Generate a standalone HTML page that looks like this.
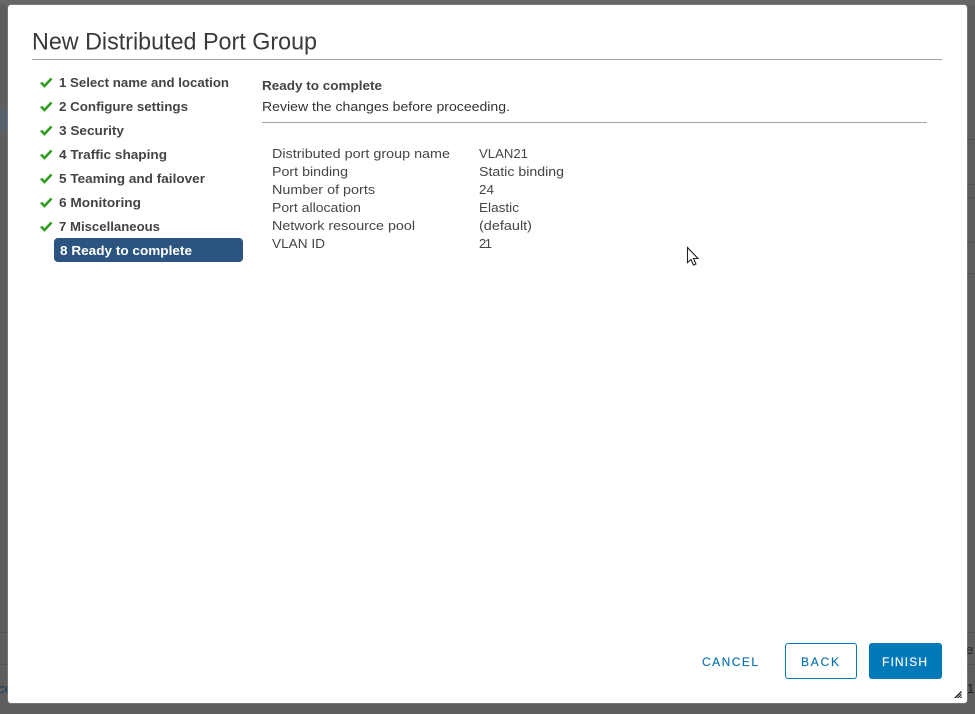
<!DOCTYPE html>
<html lang="en">
<head>
<meta charset="utf-8">
<title>New Distributed Port Group</title>
<style>
html,body{margin:0;padding:0;width:975px;height:714px;overflow:hidden;background:#5e5e5e}
svg{display:block;position:absolute;left:0;top:0}
text{font-family:"Liberation Sans",sans-serif}
.m{font-size:13px;font-weight:700;fill:#444}
.t{font-size:13px;fill:#454545}
.b{font-size:12px;stroke-width:.15px}
</style>
</head>
<body>
<svg width="975" height="714" viewBox="0 0 975 714" xmlns="http://www.w3.org/2000/svg">
  <rect width="975" height="714" fill="#5e5e5e"/>
  <rect x="0" y="0" width="975" height="5" fill="#666"/>
  <rect x="0" y="108" width="8" height="24" fill="#56616a"/>
  <g fill="#525252">
    <rect x="967" y="139" width="8" height="1"/>
    <rect x="967" y="184" width="8" height="1"/>
    <rect x="967" y="197" width="8" height="1"/>
    <rect x="967" y="242" width="8" height="1"/>
    <rect x="967" y="273" width="8" height="1"/>
    <rect x="0" y="632" width="8" height="1"/>
    <rect x="0" y="664" width="8" height="1"/>
    <rect x="967" y="632" width="8" height="1"/>
    <rect x="967" y="664" width="8" height="1"/>
  </g>
  <text x="-2" y="693" font-size="13" fill="#123f58">ce</text>
  <text x="966" y="654" font-size="13" fill="#222">e</text>
  <text x="967" y="693" font-size="13" fill="#222">1:</text>

  <rect x="7.5" y="4.5" width="960" height="699" rx="3" fill="#8e8e8e"/>
  <rect x="8" y="5" width="959" height="698" rx="3" fill="#fff"/>

  <text x="32" y="49.5" font-size="24" fill="#3a3a3a" textLength="285" lengthAdjust="spacingAndGlyphs">New Distributed Port Group</text>
  <rect x="32" y="59" width="910" height="1" fill="#a3a3a3"/>

  <g fill="none" stroke="#2f9e1f" stroke-width="2.6">
    <path d="M41 82.5l3.5 3.5 7-7.5"/>
    <path d="M41 106.5l3.5 3.5 7-7.5"/>
    <path d="M41 130.5l3.5 3.5 7-7.5"/>
    <path d="M41 154.5l3.5 3.5 7-7.5"/>
    <path d="M41 178.5l3.5 3.5 7-7.5"/>
    <path d="M41 202.5l3.5 3.5 7-7.5"/>
    <path d="M41 226.5l3.5 3.5 7-7.5"/>
  </g>

  <rect x="54" y="238" width="189" height="24" rx="4" fill="#2b5580"/>

  <text class="m" x="59" y="87" textLength="170" lengthAdjust="spacingAndGlyphs">1 Select name and location</text>
  <text class="m" x="59" y="111" textLength="129" lengthAdjust="spacingAndGlyphs">2 Configure settings</text>
  <text class="m" x="59" y="135" textLength="65" lengthAdjust="spacingAndGlyphs">3 Security</text>
  <text class="m" x="59" y="159" textLength="108" lengthAdjust="spacingAndGlyphs">4 Traffic shaping</text>
  <text class="m" x="59" y="183" textLength="146" lengthAdjust="spacingAndGlyphs">5 Teaming and failover</text>
  <text class="m" x="59" y="207" textLength="82" lengthAdjust="spacingAndGlyphs">6 Monitoring</text>
  <text class="m" x="59" y="231" textLength="101" lengthAdjust="spacingAndGlyphs">7 Miscellaneous</text>
  <text class="m" x="60" y="255" textLength="132" lengthAdjust="spacingAndGlyphs" style="fill:#fff">8 Ready to complete</text>

  <text class="m" x="262" y="90" textLength="120" lengthAdjust="spacingAndGlyphs">Ready to complete</text>
  <text class="t" x="262" y="111" textLength="248" lengthAdjust="spacingAndGlyphs" style="fill:#333">Review the changes before proceeding.</text>
  <rect x="262" y="122" width="665" height="1" fill="#a3a3a3"/>

  <text class="t" x="272" y="158" textLength="178" lengthAdjust="spacingAndGlyphs">Distributed port group name</text>
  <text class="t" x="272" y="176" textLength="76" lengthAdjust="spacingAndGlyphs">Port binding</text>
  <text class="t" x="272" y="194" textLength="103" lengthAdjust="spacingAndGlyphs">Number of ports</text>
  <text class="t" x="272" y="212" textLength="89" lengthAdjust="spacingAndGlyphs">Port allocation</text>
  <text class="t" x="272" y="230" textLength="143" lengthAdjust="spacingAndGlyphs">Network resource pool</text>
  <text class="t" x="272" y="248" textLength="53" lengthAdjust="spacingAndGlyphs">VLAN ID</text>

  <text class="t" x="479" y="158" textLength="49" lengthAdjust="spacingAndGlyphs">VLAN21</text>
  <text class="t" x="479" y="176" textLength="85" lengthAdjust="spacingAndGlyphs">Static binding</text>
  <text class="t" x="479" y="194" textLength="15" lengthAdjust="spacingAndGlyphs">24</text>
  <text class="t" x="479" y="212" textLength="40" lengthAdjust="spacingAndGlyphs">Elastic</text>
  <text class="t" x="479" y="230" textLength="53" lengthAdjust="spacingAndGlyphs">(default)</text>
  <text class="t" x="479" y="248" textLength="13" lengthAdjust="spacing">21</text>

  <path d="M687.5 247.5v15l3.5-3 2.5 5.5 2.5-1-2.5-5.5h4.5z" fill="#fff" stroke="#222" stroke-width="1.1"/>

  <text class="b" x="702" y="666" fill="#0a72ad" stroke="#0a72ad" textLength="56" lengthAdjust="spacing">CANCEL</text>
  <rect x="785.5" y="643.5" width="71" height="35" rx="2.5" fill="#fff" stroke="#0079b8"/>
  <text class="b" x="801" y="666" fill="#0a72ad" stroke="#0a72ad" textLength="38" lengthAdjust="spacing">BACK</text>
  <rect x="869" y="643" width="73" height="36" rx="3" fill="#0079b8"/>
  <text class="b" x="882" y="666" fill="#fff" stroke="#fff" textLength="45" lengthAdjust="spacing">FINISH</text>

  <path d="M954 698l7.5-7.5v7.5z" fill="#222"/>
  <g stroke="#fff" stroke-width=".6" fill="none">
    <path d="M956 698.5l6-6"/>
    <path d="M958.5 698.5l3.5-3.5"/>
  </g>
</svg>
</body>
</html>
